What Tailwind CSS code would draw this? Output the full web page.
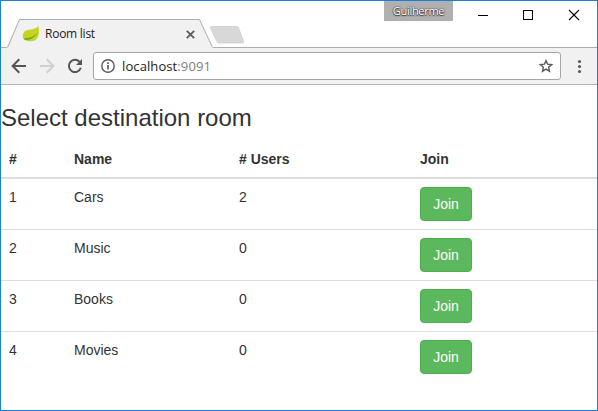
<!DOCTYPE html>
<html lang="en">
<head>
<meta charset="utf-8">
<title>Room list</title>
<script src="https://cdn.jsdelivr.net/npm/@tailwindcss/browser@4"></script>
</head>
<body class="bg-white">
<div class="flex h-[411px] w-[598px] flex-col overflow-hidden border border-[#1a80d4] bg-white font-['Liberation_Sans',Arial,sans-serif] text-[14px] leading-[20px] text-[#333]">
  <!-- Title bar with tab strip -->
  <header class="relative flex h-[47px] shrink-0 justify-between">
    <svg class="absolute inset-0" width="596" height="47" viewBox="1 1 596 47" fill="none">
      <path d="M1 47.5H6.500L19.500 19.500H199.500L212.500 47.500H597V48H1Z" fill="#f1f1f1"/>
      <path d="M1 47.500H6.500Q7.500 47.500 8 46.500L19.500 19.500H199.500L212 46.500Q212.500 47.500 213.500 47.500H597" stroke="#adadad"/>
      <path d="M211.500 26.500H236.500Q238 26.500 238.700 28L243.500 41.500Q244 43 242.500 43H219.500Q217.500 43 216.800 41.500L210.500 28Q210 26.500 211.500 26.500Z" fill="#d8d8d8" stroke="#c8c8c8" stroke-width=".7"/>
    </svg>
    <div class="relative mt-[22px] ml-[21px] flex h-[22px] w-[177px] items-center">
      <svg width="18" height="18" viewBox="0 0 18 18">
        <path d="M16.300 1C17.500 6 17.500 12 13.500 15C10 17 4.500 16.500 2 14.500C0 12 .500 7.500 4 5.500C8 4 13 5 16.300 1Z" fill="#c3d422"/>
        <path d="M2 13.300C7 13.500 12 12 15.300 7.500C13.500 12 9 14.800 3 15Z" fill="#6f9e2b"/>
      </svg>
      <span class="ml-[5px] font-['Open_Sans','Noto_Sans',sans-serif] text-[12px] leading-[16px] tracking-[-0.25px] text-[#222]">Room list</span>
      <svg class="ml-auto mr-[4px]" width="9" height="9" viewBox="0 0 9 9"><path d="M.8.8L8.200 8.200M8.200.8L.8 8.200" stroke="#5a5a5a" stroke-width="1.800"/></svg>
    </div>
    <div class="relative flex h-[28px] items-start">
      <span class="flex h-[20px] w-[69px] items-center justify-center bg-[#b0b0b0] font-['Open_Sans','Noto_Sans',sans-serif] text-[11px] leading-[14px] tracking-[-0.3px] text-white [text-shadow:0_0_2px_#333,0_0_1px_#444,0_1px_1px_#444]">Guilherme</span>
      <svg width="144" height="28" viewBox="453 1 144 28" fill="none" stroke="#000" shape-rendering="crispEdges">
        <path d="M478 15.500H488"/>
        <rect x="523.500" y="10.500" width="9" height="9"/>
        <path d="M569 10L579 20M579 10L569 20" shape-rendering="auto" stroke-width="1.100"/>
      </svg>
    </div>
  </header>
  <!-- Navigation toolbar -->
  <nav class="flex h-[37px] shrink-0 items-start border-b border-[#b4b4b4] bg-[#f1f1f1]">
    <svg width="92" height="36" viewBox="1 48 92 36" fill="none" stroke="#555" stroke-width="2">
      <path d="M26 66H13M19.300 59.300L12.600 66L19.300 72.700"/>
      <path d="M40 66H53M46.700 59.300L53.400 66L46.700 72.700" stroke="#cfcfcf"/>
      <path d="M79.600 61.900A6.100 6.100 0 1 0 80.800 67.800"/>
      <path d="M82 59V65H76Z" fill="#555" stroke="none"/>
    </svg>
    <div class="mt-[4px] flex h-[28px] w-[468px] items-center rounded-[3px] border border-[#a6a6a6] bg-white">
      <svg class="ml-[7px]" width="14" height="14" viewBox="0 0 14 14" fill="none" stroke="#5a5a5a">
        <circle cx="7" cy="7" r="6.200" stroke-width="1.400"/>
        <path d="M7 6V10.500M7 3.300V4.900" stroke-width="1.700"/>
      </svg>
      <span class="ml-[7px] font-['Open_Sans','Noto_Sans',sans-serif] text-[13px] leading-[20px] tracking-[0.1px] text-[#222]">localhost<span class="text-[#808080]">:9091</span></span>
      <svg class="ml-auto mr-[7px]" width="14" height="14" viewBox="0 0 14 14"><path d="M7 1.600L8.600 5.200L12.700 5.600L9.600 8.200L10.500 12.200L7 10.100L3.500 12.200L4.400 8.200L1.300 5.600L5.400 5.200Z" fill="none" stroke="#5a5a5a" stroke-width="1.400"/></svg>
    </div>
    <svg class="ml-[16px]" width="5" height="36" viewBox="0 48 5 36" fill="#5a5a5a"><circle cx="2.500" cy="61.500" r="1.600"/><circle cx="2.500" cy="66.500" r="1.600"/><circle cx="2.500" cy="71.500" r="1.600"/></svg>
  </nav>
  <!-- Page -->
  <main>
    <h3 class="mt-[20px] mb-[9px] text-[24px] leading-[26px]">Select destination room</h3>
    <table class="w-full table-fixed border-collapse text-left">
      <colgroup><col class="w-[65px]"><col class="w-[165px]"><col class="w-[181px]"><col></colgroup>
      <thead>
        <tr class="h-[38px] border-b-2 border-[#ddd]"><th class="px-2">#</th><th class="px-2">Name</th><th class="px-2"># Users</th><th class="px-2">Join</th></tr>
      </thead>
      <tbody class="align-top">
        <tr><td class="p-2">1</td><td class="p-2">Cars</td><td class="p-2">2</td><td class="p-2"><button class="block h-[34px] w-[52px] rounded-[4px] border border-[#4cae4c] bg-[#5cb85c] text-white">Join</button></td></tr>
        <tr class="border-t border-[#ddd]"><td class="p-2">2</td><td class="p-2">Music</td><td class="p-2">0</td><td class="p-2"><button class="block h-[34px] w-[52px] rounded-[4px] border border-[#4cae4c] bg-[#5cb85c] text-white">Join</button></td></tr>
        <tr class="border-t border-[#ddd]"><td class="p-2">3</td><td class="p-2">Books</td><td class="p-2">0</td><td class="p-2"><button class="block h-[34px] w-[52px] rounded-[4px] border border-[#4cae4c] bg-[#5cb85c] text-white">Join</button></td></tr>
        <tr class="border-t border-[#ddd]"><td class="p-2">4</td><td class="p-2">Movies</td><td class="p-2">0</td><td class="p-2"><button class="block h-[34px] w-[52px] rounded-[4px] border border-[#4cae4c] bg-[#5cb85c] text-white">Join</button></td></tr>
      </tbody>
    </table>
  </main>
</div>
</body>
</html>
